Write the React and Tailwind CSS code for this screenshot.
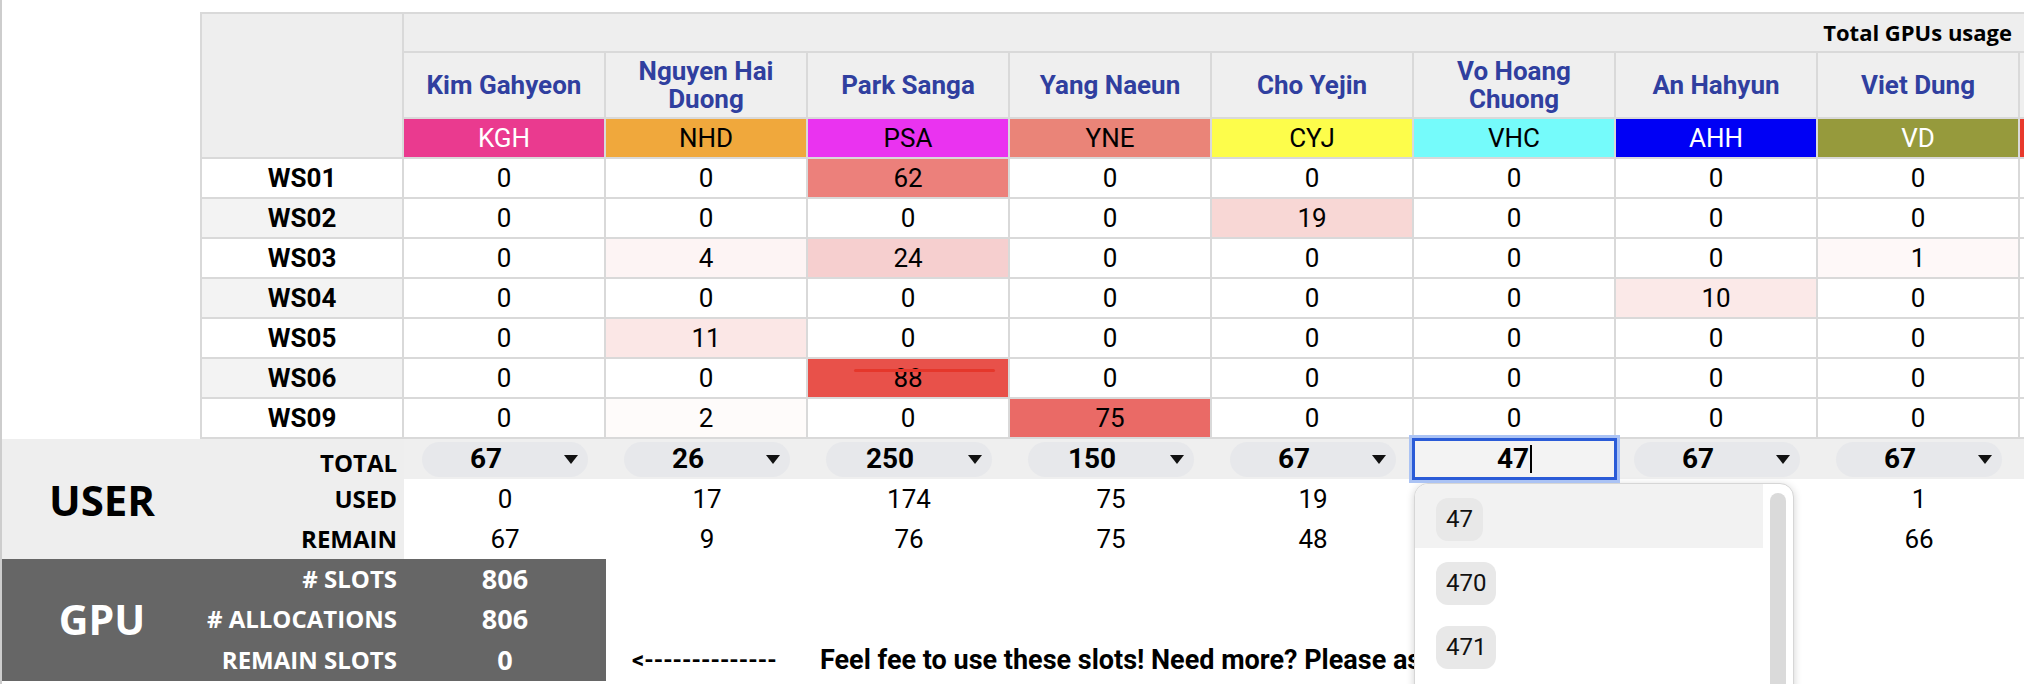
import React from 'react'

const users = [
    { name: 'Kim Gahyeon', code: 'KGH', codeCls: 'bg-[#ea3a8f] text-white', total: '67', used: '0', remain: '67' },
    { name: 'Nguyen Hai Duong', code: 'NHD', codeCls: 'bg-[#f0a83c] text-black', total: '26', used: '17', remain: '9' },
    { name: 'Park Sanga', code: 'PSA', codeCls: 'bg-[#ea33f0] text-black', total: '250', used: '174', remain: '76' },
    { name: 'Yang Naeun', code: 'YNE', codeCls: 'bg-[#ea8478] text-black', total: '150', used: '75', remain: '75' },
    { name: 'Cho Yejin', code: 'CYJ', codeCls: 'bg-[#fdfd4b] text-black', total: '67', used: '19', remain: '48' },
    { name: 'Vo Hoang Chuong', code: 'VHC', codeCls: 'bg-[#75fbfb] text-black', total: '47', used: '0', remain: '47', editing: true },
    { name: 'An Hahyun', code: 'AHH', codeCls: 'bg-[#0000f5] text-white', total: '67', used: '10', remain: '57' },
    { name: 'Viet Dung', code: 'VD', codeCls: 'bg-[#969a3c] text-white', total: '67', used: '1', remain: '66' },
]

const rows = [
    { ws: 'WS01', vals: [0, 0, 62, 0, 0, 0, 0, 0] },
    { ws: 'WS02', vals: [0, 0, 0, 0, 19, 0, 0, 0] },
    { ws: 'WS03', vals: [0, 4, 24, 0, 0, 0, 0, 1] },
    { ws: 'WS04', vals: [0, 0, 0, 0, 0, 0, 10, 0] },
    { ws: 'WS05', vals: [0, 11, 0, 0, 0, 0, 0, 0] },
    { ws: 'WS06', vals: [0, 0, 88, 0, 0, 0, 0, 0] },
    { ws: 'WS09', vals: [0, 2, 0, 75, 0, 0, 0, 0] },
]

// heat scale, picked by hand from the sheet
const heat = {
    1: 'bg-[#fef8f8]',
    2: 'bg-[#fefbfa]',
    4: 'bg-[#fdf4f4]',
    10: 'bg-[#fbe9e8]',
    11: 'bg-[#fbe7e6]',
    19: 'bg-[#f8d7d5]',
    24: 'bg-[#f6cfcf]',
    62: 'bg-[#ec807b]',
    75: 'bg-[#ea6a66]',
    88: 'bg-[#e8514a]',
}

const cell = 'border-r-2 border-b-2 border-[#d9d9d9] flex items-center justify-center'
const label = "font-['Open_Sans',sans-serif] font-bold text-[24px] flex items-center justify-end pr-[7px]"
const gpuValue = "bg-[#666666] text-white flex items-center justify-center font-['Open_Sans',sans-serif] font-bold text-[27px]"

const Caret = () => (
    <svg width="14" height="9" viewBox="0 0 14 9">
        <polygon points="0,0 14,0 7,9" fill="#111" />
    </svg>
)

const TotalPill = ({ value }) => (
    <div className="h-[35px] mx-[18px] rounded-full bg-[#e7e8eb] flex items-center pr-[10px]">
        <span className="flex-1 text-center pr-[14px] font-bold text-[28px]">{value}</span>
        <Caret />
    </div>
)

const EditingCell = ({ value }) => (
    <div className="relative h-full">
        {/* active input */}
        <div className="absolute -left-[5px] -top-[4px] -right-[4px] -bottom-[4px] border-[3px] border-[#abc3f4] z-20">
            <div className="h-full border-[3px] border-[#2a5bd7] bg-[#f3f3f3] flex items-center justify-center">
                <span className="font-bold text-[28px]">{value}</span>
                <span className="w-[2px] h-[28px] bg-black ml-[1px]" />
            </div>
        </div>

        {/* suggestions */}
        <div className="absolute left-0 top-[44px] w-[380px] h-[240px] bg-white rounded-[14px] border border-[#d6d6d6] shadow-[0_2px_8px_rgba(0,0,0,0.18)] overflow-hidden z-10">
            {['47', '470', '471'].map((opt, i) => (
                <div key={opt} className={`w-[348px] h-[64px] flex items-center pt-[6px] pl-[21px] ${i === 0 ? 'bg-[#f2f2f2]' : ''}`}>
                    <span className="h-[43px] px-[10px] rounded-[12px] bg-[#e8e8e8] flex items-center text-[24px] text-[#111]">
                        {opt}
                    </span>
                </div>
            ))}
            <div className="absolute right-[7px] top-[9px] w-[16px] h-[300px] rounded-full bg-[#dadada]" />
        </div>
    </div>
)

export default function App() {
    return (
        <div className="w-[2024px] h-[684px] overflow-hidden bg-white border-l-2 border-[#cdcdcd] font-['Roboto',sans-serif] text-black">

            {/* USAGE TABLE */}
            <div className="ml-[198px] mt-[12px] w-[2020px] grid grid-cols-[repeat(10,202px)] grid-rows-[39px_66px_40px_repeat(7,40px)] border-l-2 border-t-2 border-[#d9d9d9]">

                <div className="row-span-3 bg-[#eeeeee] border-r-2 border-b-2 border-[#d9d9d9]" />

                <div className="col-span-8 bg-[#eeeeee] border-b-2 border-[#d9d9d9] flex items-center justify-end pr-[8px] font-['Open_Sans',sans-serif] font-bold text-[22px]">
                    Total GPUs usage
                </div>
                <div className="bg-[#eeeeee] border-b-2 border-[#d9d9d9]" />

                {users.map((u) => (
                    <div key={u.name} className={`${cell} bg-[#efefef] px-[12px] text-center font-bold text-[26px] leading-[28px] text-[#303f9f]`}>
                        {u.name}
                    </div>
                ))}
                <div className={`${cell} bg-[#efefef]`} />

                {users.map((u) => (
                    <div key={u.code} className={`${cell} ${u.codeCls} text-[26px]`}>
                        {u.code}
                    </div>
                ))}
                <div className={`${cell} bg-[#e8392c]`} />

                {rows.map((r, ri) => (
                    <React.Fragment key={r.ws}>
                        <div className={`${cell} font-bold text-[26px] ${ri % 2 === 1 ? 'bg-[#f3f3f3]' : 'bg-white'}`}>
                            {r.ws}
                        </div>
                        {r.vals.map((v, i) => (
                            <div key={i} className={`${cell} relative text-[26px] ${heat[v] || 'bg-white'}`}>
                                {v}
                                {r.ws === 'WS06' && v === 88 && (
                                    <span className="absolute left-[46px] top-[10px] w-[141px] h-[3px] rounded-full bg-[#e5372b]" />
                                )}
                            </div>
                        ))}
                        <div className={`${cell} bg-white`} />
                    </React.Fragment>
                ))}
            </div>

            {/* USER / GPU SUMMARY */}
            <div className="w-[2022px] grid grid-cols-[200px_202px_repeat(9,202px)] grid-rows-[40px_40px_40px_40px_40px_42px]">

                <div className="row-span-3 bg-[#eeeeee] flex items-center justify-center font-['Open_Sans',sans-serif] font-bold text-[42px]">
                    USER
                </div>
                <div className={`${label} bg-[#eeeeee] pt-[8px]`}>TOTAL</div>
                {users.map((u) => (
                    <div key={u.code} className="bg-[#efefef] flex flex-col justify-center">
                        {u.editing ? <EditingCell value={u.total} /> : <TotalPill value={u.total} />}
                    </div>
                ))}
                <div className="bg-[#efefef]" />

                <div className={`${label} bg-[#eeeeee]`}>USED</div>
                {users.map((u) => (
                    <div key={u.code} className="flex items-center justify-center text-[26px]">{u.used}</div>
                ))}
                <div />

                <div className={`${label} bg-[#eeeeee]`}>REMAIN</div>
                {users.map((u) => (
                    <div key={u.code} className="flex items-center justify-center text-[26px]">{u.remain}</div>
                ))}
                <div />

                <div className="row-span-3 bg-[#666666] text-white flex items-center justify-center font-['Open_Sans',sans-serif] font-bold text-[41px]">
                    GPU
                </div>
                <div className={`${label} bg-[#666666] text-white`}># SLOTS</div>
                <div className={gpuValue}>806</div>
                <div className="col-span-8" />

                <div className={`${label} bg-[#666666] text-white`}># ALLOCATIONS</div>
                <div className={gpuValue}>806</div>
                <div className="col-span-8" />

                <div className={`${label} bg-[#666666] text-white`}>REMAIN SLOTS</div>
                <div className={gpuValue}>0</div>
                <div className="col-span-8 flex items-center pl-[26px] font-bold whitespace-nowrap">
                    <span className="w-[146px] text-[24px]">&lt;--------------</span>
                    <span className="ml-[42px] text-[27px]">Feel fee to use these slots! Need more? Please ask</span>
                </div>
            </div>
        </div>
    )
}
